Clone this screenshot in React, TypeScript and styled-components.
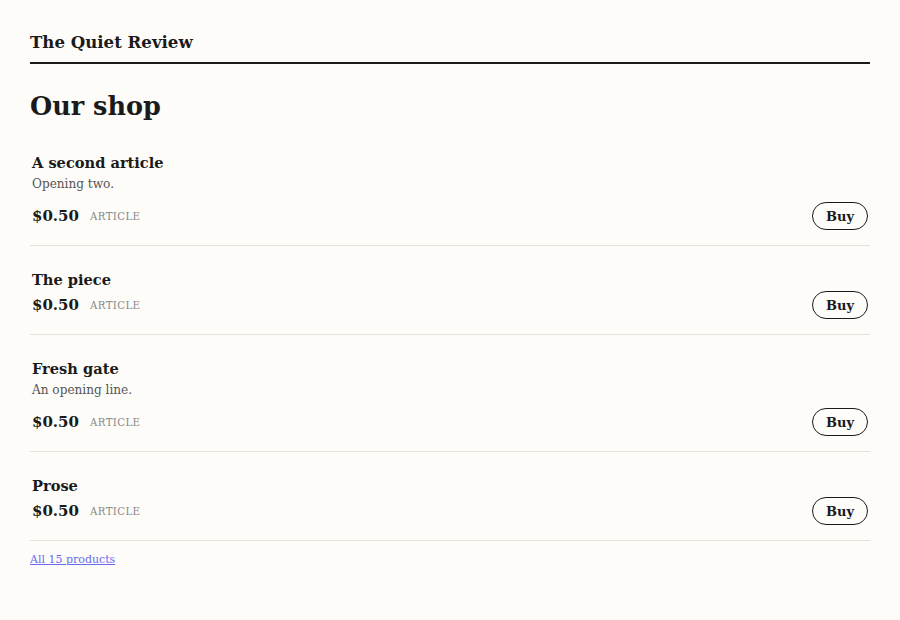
import styled, { createGlobalStyle } from 'styled-components'

const GlobalStyle = createGlobalStyle`
  html, body {
    margin: 0;
    padding: 0;
    background: #fdfcf8;
  }
  body {
    font-family: Georgia, "DejaVu Serif", serif;
    color: #1a1a1a;
  }
`

const Page = styled.div`
  padding: 27px 30px 40px;
`

const Masthead = styled.header`
  font-size: 16.6px;
  font-weight: 700;
  line-height: 30px;
  padding-bottom: 5px;
  border-bottom: 2px solid #1a1a1a;
`

const Heading = styled.h1`
  font-size: 25.5px;
  font-weight: 700;
  line-height: 34px;
  margin: 25px 0 6px;
`

const List = styled.div`
  display: flex;
  flex-direction: column;
`

const Item = styled.div`
  padding: 23px 2px 15px;
  border-bottom: 1px solid #e4e2dc;
`

const Title = styled.div`
  font-size: 14.6px;
  font-weight: 700;
  line-height: 22px;
`

const Desc = styled.div`
  font-size: 12.1px;
  line-height: 20px;
  color: #555;
  margin-bottom: 8px;
`

const PriceRow = styled.div`
  display: flex;
  align-items: center;
  height: 28px;
`

const Price = styled.span`
  font-size: 15px;
  font-weight: 700;
`

const Kind = styled.span`
  font-size: 10.2px;
  letter-spacing: 0.4px;
  text-transform: uppercase;
  color: #888;
  margin-left: 11px;
`

const BuyButton = styled.button`
  margin-left: auto;
  height: 28px;
  padding: 0 13px;
  border: 1px solid #1a1a1a;
  border-radius: 14px;
  background: transparent;
  font-family: inherit;
  font-size: 13px;
  font-weight: 700;
  color: #1a1a1a;
  cursor: pointer;
`

const AllLink = styled.a`
  display: inline-block;
  margin-top: 12px;
  font-size: 11px;
  color: #6b6bf0;
  text-decoration: underline;
`

const products = [
  { title: 'A second article', desc: 'Opening two.' },
  { title: 'The piece' },
  { title: 'Fresh gate', desc: 'An opening line.' },
  { title: 'Prose' },
]

export default function App() {
  return (
    <>
      <GlobalStyle />
      <Page>
        <Masthead>The Quiet Review</Masthead>
        <Heading>Our shop</Heading>
        <List>
          {products.map(p => (
            <Item key={p.title}>
              <Title>{p.title}</Title>
              {p.desc && <Desc>{p.desc}</Desc>}
              <PriceRow>
                <Price>$0.50</Price>
                <Kind>Article</Kind>
                <BuyButton>Buy</BuyButton>
              </PriceRow>
            </Item>
          ))}
        </List>
        <AllLink href="#">All 15 products</AllLink>
      </Page>
    </>
  )
}
